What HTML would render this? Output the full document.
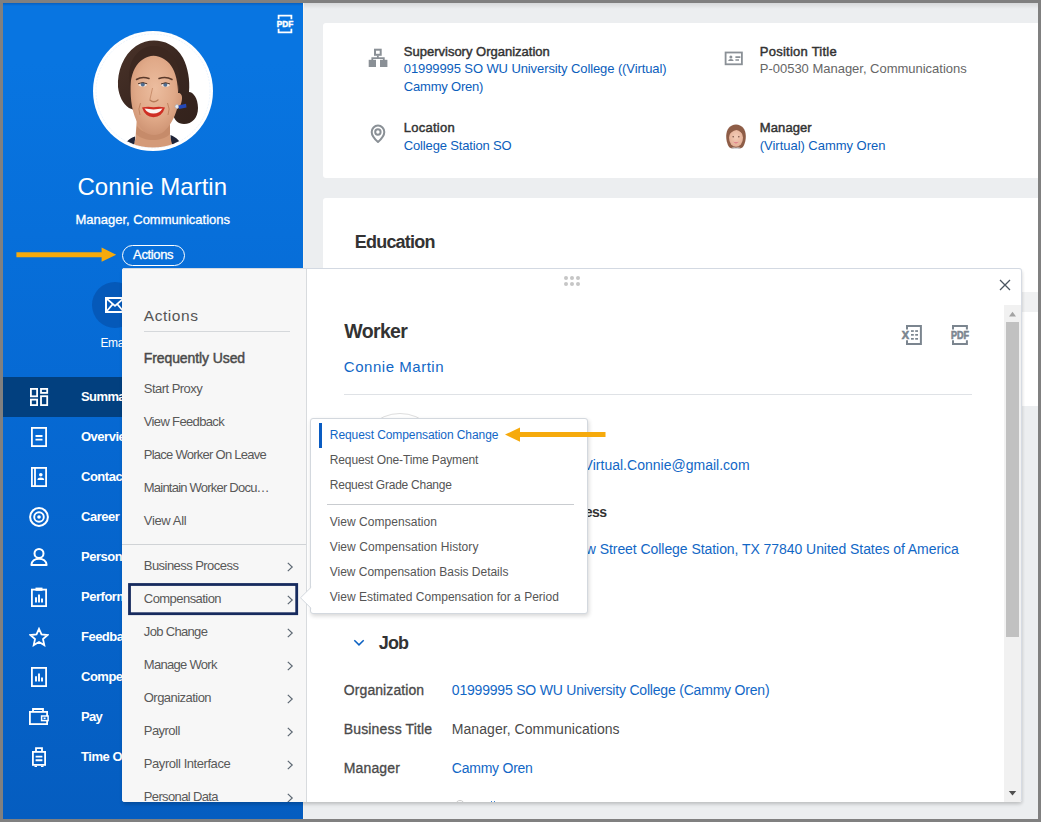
<!DOCTYPE html>
<html lang="en">
<head>
<meta charset="utf-8">
<title>Worker Profile - Connie Martin</title>
<style>
*{box-sizing:border-box;margin:0;padding:0}
html,body{width:1041px;height:822px;overflow:hidden;background:#808080;font-family:"Liberation Sans",Arial,sans-serif}
#frame{position:absolute;left:3px;top:3px;width:1035px;height:816px;overflow:hidden;background:#eceef0}
.abs{position:absolute}
.t{position:absolute;white-space:nowrap;line-height:1;font-size:14px;color:#333}
/* sidebar */
#side{position:absolute;left:0;top:0;width:300px;height:816px;background:linear-gradient(180deg,#0875e1 0px,#0875e1 60px,#0669d3 400px,#055dc0 816px)}
#side .topshade{position:absolute;left:0;top:0;width:300px;height:3px;background:linear-gradient(180deg,rgba(0,40,110,.28),rgba(0,40,110,0))}
#sel{position:absolute;left:0;top:374px;width:300px;height:40px;background:#02407f}
.ico{position:absolute;left:26px;width:20px;height:20px}
/* cards */
.card{position:absolute;background:#fff;border-radius:3px 0 0 3px}
/* popup */
#pop{position:absolute;left:119px;top:265px;width:900px;height:534px;background:#fff;border-radius:3px;box-shadow:0 3px 4px -1px rgba(0,0,0,.15),1px 2px 3px rgba(0,0,0,.07)}
#menu{position:absolute;left:0;top:0;width:185px;height:534px;background:#f7f7f7;border-right:1px solid #d8dbde;border-radius:3px 0 0 3px;overflow:hidden}
.chev{position:absolute;left:164px;width:8px;height:12px}
#body{position:absolute;left:185px;top:0;width:715px;height:534px;overflow:hidden;border-radius:0 3px 3px 0}
/* submenu */
#sub{position:absolute;left:307px;top:415px;width:278px;height:196px;background:#fff;border:1px solid #d3d8de;border-radius:3px;box-shadow:1px 2px 4px rgba(0,0,0,.16)}
</style>
</head>
<body>
<div id="frame">

<!-- ================= SIDEBAR ================= -->
<div id="side">
  <div class="topshade"></div>
  <div id="sel"></div>
  <!-- pdf icon -->
  <svg class="abs" style="left:270px;top:8px" width="26" height="26" viewBox="0 0 26 26">
    <path d="M5.6 8.2V4.7H18.4V8.2M5.6 17.8V21.3H18.4V17.8" fill="none" stroke="#fff" stroke-width="1.8"/>
    <text x="3.8" y="16.4" font-family="Liberation Sans, Arial, sans-serif" font-size="9" font-weight="700" fill="#fff" stroke="#fff" stroke-width="0.5" textLength="16.4" lengthAdjust="spacingAndGlyphs">PDF</text>
  </svg>
  <!-- avatar -->
  <svg class="abs" style="left:89px;top:27px" width="122" height="122" viewBox="0 0 122 122">
    <defs>
      <clipPath id="avc"><circle cx="61" cy="61" r="56.5"/></clipPath>
      <radialGradient id="skin" cx="0.48" cy="0.42" r="0.62">
        <stop offset="0" stop-color="#ecbd9f"/><stop offset="0.6" stop-color="#e0a988"/><stop offset="1" stop-color="#cb9070"/>
      </radialGradient>
      <linearGradient id="hairg" x1="0" y1="0" x2="1" y2="1">
        <stop offset="0" stop-color="#4a3329"/><stop offset="0.5" stop-color="#3a2720"/><stop offset="1" stop-color="#33221c"/>
      </linearGradient>
    </defs>
    <circle cx="61" cy="61" r="60" fill="#fff"/>
    <circle cx="61" cy="61" r="57" fill="none" stroke="#d9e8fa" stroke-width="0.5" stroke-dasharray="2 1.2"/>
    <g clip-path="url(#avc)">
      <!-- hair back incl. bun -->
      <path d="M37 78C31 74 27 66 26 57C25 42 31 25 44 16C50 12 56 10.5 62 10.5C72 10.5 84 15 91 28C96 38 98 50 97 62C101 62 106 68 106 78C106 88 100 94 92 94C86 94 82 90 81 84L42 80Z" fill="url(#hairg)"/>
      <!-- neck -->
      <path d="M45 86L43.5 108C43 113 40 116 37 118L36 122H86L84 114C80 112 78 109 78 104L78 82Z" fill="#d49a78"/>
      <path d="M45 96C52 106 70 106 78 94L78 104C70 112 52 112 44 104Z" fill="#b97f5e" opacity=".55"/>
      <!-- clothes -->
      <path d="M30 122C31 114 36 109 43 106.5C43.5 110 42 114 40 122Z" fill="#1f2438"/>
      <path d="M92 122C91 114 86 108 78.5 105C78.5 110 80 115 83 122Z" fill="#1f2438"/>
      <!-- face -->
      <path d="M38.5 52C38 38 46 25.5 61.5 25.5C77 25.5 86.5 37 86.5 52C86.5 56 86.3 60 86 63C88.5 62.5 90.5 65 90 69C89.5 74 87.5 78 85 79C82.5 88 78 96 72 101.5C67 106 57 106 52 101.5C44 94 39.5 80 38.8 66C38.6 61 38.5 56 38.5 52Z" fill="url(#skin)"/>
      <!-- hair front / hairline -->
      <path d="M61.5 16C52 16 42 23 38.5 35C36.5 43 36.5 52 38 61C38.3 49 41 39 46.5 33C51.5 28 57 26 61.5 25.5C66 26 72 28 77 33C82.5 39 85.5 49 86 61C88 52 88 42 85 34C81 23 72 16 61.5 16Z" fill="#3c2820"/>
      <!-- brows -->
      <path d="M44.5 49.5Q50 46 57 48.5M67 48.5Q74 46 80 49.5" stroke="#5b3a2b" stroke-width="1.5" fill="none" stroke-linecap="round"/>
      <!-- eyes -->
      <ellipse cx="50.6" cy="54.6" rx="4.2" ry="2" fill="#f1e4dc"/>
      <ellipse cx="73.5" cy="54.8" rx="4.2" ry="2" fill="#f1e4dc"/>
      <circle cx="50.8" cy="54.6" r="2" fill="#4f6f94"/>
      <circle cx="73.3" cy="54.8" r="2" fill="#4f6f94"/>
      <path d="M46 53.8Q50.6 51.2 55.2 53.8M69 54Q73.5 51.4 78 54" stroke="#4a3026" stroke-width="1" fill="none"/>
      <!-- nose -->
      <path d="M58 70Q61.5 73.5 66 70" stroke="#b57a59" stroke-width="1.3" fill="none" stroke-linecap="round"/>
      <path d="M60.5 58Q59 65 58 69" stroke="#c98f6d" stroke-width="1" fill="none"/>
      <!-- smile lines -->
      <path d="M48.5 73Q45.5 79 48 85M75.5 73Q78.5 79 76 85" stroke="#c08461" stroke-width="1" fill="none"/>
      <!-- mouth -->
      <path d="M50 77.5Q56 76 61.5 77.3Q67 76 73 77.5Q70 87 61.5 87.2Q53 87 50 77.5Z" fill="#cf2f24"/>
      <path d="M52.5 78.6Q61.5 80.2 70.5 78.6Q67.5 83.6 61.5 83.6Q55.5 83.6 52.5 78.6Z" fill="#fbf6f2"/>
      <!-- earring + tie -->
      <circle cx="85" cy="76.5" r="2" fill="#e9ebee" stroke="#9aa0a8" stroke-width=".5"/>
      <path d="M86.5 75.5L94 73.8L94.5 77.5L87 79Z" fill="#2348b8"/>
    </g>
  </svg>
  <!-- actions button -->
  <div class="abs" style="left:119px;top:242px;width:63px;height:21px;border:1px solid #fff;border-radius:11px"></div>
  <!-- orange arrow -->
  <svg class="abs" style="left:10px;top:240px" width="110" height="24" viewBox="0 0 110 24">
    <path d="M3.4 9.2H88.6V4.5L103.2 11.7L88.6 18.8V14.2H3.4Z" fill="#f6aa0c"/>
  </svg>
  <!-- email -->
  <div class="abs" style="left:89px;top:279px;width:46px;height:46px;border-radius:50%;background:#0559b9"></div>
  <svg class="abs" style="left:101px;top:293px" width="22" height="18" viewBox="0 0 22 18">
    <rect x="2" y="2" width="18" height="14" fill="none" stroke="#fff" stroke-width="2"/>
    <path d="M2.5 2.5L11 9.8L19.5 2.5M2.5 15.5L8.3 8.6M19.5 15.5L13.7 8.6" fill="none" stroke="#fff" stroke-width="1.7"/>
  </svg>
  <svg class="ico" style="top:384px" viewBox="0 0 20 20"><rect x="1.9" y="1.9" width="6.2" height="7.4" stroke="#fff" fill="none" stroke-width="1.8"/><rect x="12" y="1.9" width="6.2" height="4" stroke="#fff" fill="none" stroke-width="1.8"/><rect x="1.9" y="12.6" width="6.2" height="5.5" stroke="#fff" fill="none" stroke-width="1.8"/><rect x="12" y="9.2" width="6.2" height="8.9" stroke="#fff" fill="none" stroke-width="1.8"/></svg>
  <svg class="ico" style="top:424px" viewBox="0 0 20 20"><rect x="2.9" y="0.9" width="14.2" height="18.2" stroke="#fff" fill="none" stroke-width="1.8"/><path d="M6.5 9H13.5M6.5 12.6H13.5" stroke="#fff" fill="none" stroke-width="1.8"/></svg>
  <svg class="ico" style="top:464px" viewBox="0 0 20 20"><rect x="2.9" y="0.9" width="14.2" height="18.2" stroke="#fff" fill="none" stroke-width="1.8"/><path d="M6 0.9V19.1" stroke="#fff" fill="none" stroke-width="1.8" stroke-width="1.4"/><circle cx="11.8" cy="7.7" r="1.8" fill="#fff"/><path d="M8.4 13C8.4 9.8 15.2 9.8 15.2 13Z" fill="#fff"/></svg>
  <svg class="ico" style="top:504px" viewBox="0 0 20 20"><circle cx="10" cy="10" r="8.9" stroke="#fff" fill="none" stroke-width="2"/><circle cx="10" cy="10" r="4.8" stroke="#fff" fill="none" stroke-width="1.9"/><circle cx="10" cy="10" r="1.8" fill="#fff"/></svg>
  <svg class="ico" style="top:544px" viewBox="0 0 20 20"><circle cx="10" cy="6.4" r="4.5" stroke="#fff" fill="none" stroke-width="2"/><path d="M2.4 18.1C2.4 9.6 17.6 9.6 17.6 18.1Z" stroke="#fff" fill="none" stroke-width="2" stroke-linejoin="round"/></svg>
  <svg class="ico" style="top:584px" viewBox="0 0 20 20"><rect x="2.9" y="2.6" width="14.2" height="16.5" stroke="#fff" fill="none" stroke-width="1.8"/><rect x="6.5" y="0.6" width="7" height="3.2" fill="#fff"/><path d="M7 15.6V10.2M10 15.6V7.6M13 15.6V11.6" stroke="#fff" fill="none" stroke-width="1.9"/></svg>
  <svg class="ico" style="top:624px" viewBox="0 0 20 20"><path d="M10 1.8L12.5 7.4L18.6 8L14 12.1L15.3 18.1L10 15L4.7 18.1L6 12.1L1.4 8L7.5 7.4Z" stroke="#fff" fill="none" stroke-width="1.8" stroke-width="1.7" stroke-linejoin="miter"/></svg>
  <svg class="ico" style="top:664px" viewBox="0 0 20 20"><rect x="2.9" y="0.9" width="14.2" height="18.2" stroke="#fff" fill="none" stroke-width="1.8"/><path d="M7 14.4V9.2M10 14.4V6.4M13 14.4V10.6" stroke="#fff" fill="none" stroke-width="1.9"/></svg>
  <svg class="ico" style="top:704px" viewBox="0 0 20 20"><rect x="0.9" y="4.9" width="17.2" height="12.2" stroke="#fff" fill="none" stroke-width="1.8"/><path d="M4 4.5V2H14V4.5" stroke="#fff" fill="none" stroke-width="1.8"/><rect x="12.6" y="9" width="6.5" height="4.6" fill="#0561c8" stroke="#fff" stroke-width="1.5"/><rect x="14.6" y="10.5" width="2" height="1.6" fill="#fff"/></svg>
  <svg class="ico" style="top:744px" viewBox="0 0 20 20"><rect x="3.9" y="4.9" width="12.2" height="13" stroke="#fff" fill="none" stroke-width="1.8"/><path d="M7 4.5V1.2H13V4.5M5.5 19.6H8M12 19.6H14.5" stroke="#fff" fill="none" stroke-width="1.8" stroke-width="1.6"/><path d="M6.6 9.6H13.4M6.6 13.3H13.4" stroke="#fff" fill="none" stroke-width="1.9"/></svg>
  <div class="t" style="left:74.50px;top:172.00px;font-size:24px;color:#fff;letter-spacing:0.008px;">Connie Martin</div>
  <div class="t" style="left:72.50px;top:210.00px;font-size:13px;color:#fff;letter-spacing:-0.006px;-webkit-text-stroke:0.3px #fff;">Manager, Communications</div>
  <div class="t" style="left:130.10px;top:245.00px;font-size:13px;color:#fff;letter-spacing:-0.373px;-webkit-text-stroke:0.3px #fff;">Actions</div>
  <div class="t" style="left:97.50px;top:334.00px;font-size:12px;color:#fff;letter-spacing:-0.379px;">Email</div>
  <div class="t" style="left:78.00px;top:387.00px;font-size:13px;color:#fff;font-weight:bold;letter-spacing:-0.592px;">Summary</div>
  <div class="t" style="left:78.00px;top:427.00px;font-size:13px;color:#fff;font-weight:bold;letter-spacing:-0.496px;">Overview</div>
  <div class="t" style="left:78.00px;top:467.00px;font-size:13px;color:#fff;font-weight:bold;letter-spacing:-0.484px;">Contact</div>
  <div class="t" style="left:78.00px;top:507.00px;font-size:13px;color:#fff;font-weight:bold;letter-spacing:-0.494px;">Career</div>
  <div class="t" style="left:78.00px;top:547.00px;font-size:13px;color:#fff;font-weight:bold;letter-spacing:-0.471px;">Personal</div>
  <div class="t" style="left:78.00px;top:587.00px;font-size:13px;color:#fff;font-weight:bold;letter-spacing:-0.477px;">Performance</div>
  <div class="t" style="left:78.00px;top:627.00px;font-size:13px;color:#fff;font-weight:bold;letter-spacing:-0.514px;">Feedback</div>
  <div class="t" style="left:78.00px;top:667.00px;font-size:13px;color:#fff;font-weight:bold;letter-spacing:-0.493px;">Compensation</div>
  <div class="t" style="left:78.00px;top:707.00px;font-size:13px;color:#fff;font-weight:bold;letter-spacing:-0.694px;">Pay</div>
  <div class="t" style="left:78.00px;top:747.00px;font-size:13px;color:#fff;font-weight:bold;letter-spacing:-0.450px;">Time Off</div>
</div>

<!-- ================= CARDS ================= -->
<div class="abs" style="left:300px;top:0;width:735px;height:6px;background:linear-gradient(180deg,rgba(0,0,0,.09),rgba(0,0,0,0))"></div>
<div class="abs" style="left:300px;top:0;width:1px;height:816px;background:#f6f2ea"></div>
<div class="card" style="left:320px;top:20px;width:715px;height:155px"></div>
<div class="card" style="left:320px;top:195px;width:715px;height:208px">
  <div class="abs" style="left:0;top:94px;width:715px;height:20px;background:#f0f1f2"></div>
</div>
<!-- org chart icon -->
<svg class="abs" style="left:365px;top:45px" width="20" height="20" viewBox="0 0 20 20">
  <rect x="7" y="1.7" width="5.7" height="5.1" fill="none" stroke="#8a9096" stroke-width="2"/>
  <path d="M9.85 7.6V10M4.3 12.2V10.05H15.8V12.2" fill="none" stroke="#8a9096" stroke-width="1.8"/>
  <rect x="0.7" y="11.8" width="7.3" height="7.2" fill="#8a9096"/>
  <rect x="12" y="11.8" width="7.4" height="7.2" fill="#8a9096"/>
</svg>
<!-- location pin icon -->
<svg class="abs" style="left:365px;top:121px" width="20" height="20" viewBox="0 0 20 20">
  <path d="M10 17.9C10 17.9 3.7 12.4 3.7 7.9A6.3 6.3 0 0 1 16.3 7.9C16.3 12.4 10 17.9 10 17.9Z" fill="none" stroke="#8a9096" stroke-width="2" stroke-linejoin="round"/>
  <circle cx="9.9" cy="8" r="2.7" fill="none" stroke="#8a9096" stroke-width="2"/>
</svg>
<!-- id card icon -->
<svg class="abs" style="left:721px;top:47px" width="22" height="17" viewBox="0 0 22 17">
  <rect x="1.6" y="2.5" width="16.3" height="11.8" fill="none" stroke="#8a9096" stroke-width="1.8"/>
  <circle cx="6.9" cy="6.9" r="1.5" fill="#8a9096"/>
  <path d="M4.2 11C4.2 8.2 9.6 8.2 9.6 11Z" fill="#8a9096"/>
  <path d="M11.4 7.1H16.4M11.4 10H15" stroke="#8a9096" stroke-width="1.6"/>
</svg>
<!-- manager avatar -->
<svg class="abs" style="left:722px;top:120px" width="22" height="27" viewBox="0 0 22 27">
  <defs><clipPath id="mgc"><path d="M11 1.400C17 1.400 20.800 6.400 20.800 13C20.800 18.400 19.200 22.800 17.400 24.400C15.400 25.600 13 26 11 26C9 26 6.600 25.600 4.600 24.400C2.800 22.800 1.200 18.400 1.200 13C1.200 6.400 5 1.400 11 1.400Z"/></clipPath>
  <radialGradient id="mgs" cx="0.5" cy="0.45" r="0.6"><stop offset="0" stop-color="#f3cdb8"/><stop offset="1" stop-color="#e3ad93"/></radialGradient></defs>
  <g clip-path="url(#mgc)">
    <rect width="22" height="27" fill="#8e5d47"/>
    <ellipse cx="11" cy="14.800" rx="7" ry="9" fill="url(#mgs)"/>
    <path d="M2.800 14C2.800 6 7.600 3 11 3C15 3 19.200 6 19.200 14C17.400 10 14.600 7.600 11.400 7C8 7.600 4.800 10 2.800 14Z" fill="#8e5d47"/>
    <circle cx="8.200" cy="13.800" r="0.800" fill="#7a5548"/><circle cx="13.800" cy="13.800" r="0.800" fill="#7a5548"/>
    <path d="M8 18.600Q11 20.400 14 18.600Q11 22.200 8 18.600Z" fill="#dc5f80"/>
    <path d="M5 27C5.500 24.600 8.500 24 11 24.800C13.500 24 16.500 24.600 17 27Z" fill="#d5d7db"/>
  </g>
</svg>
<div class="t" style="left:400.80px;top:42.00px;font-size:13px;color:#333;-webkit-text-stroke:0.45px #333;">Supervisory Organization</div>
  <div class="t" style="left:400.80px;top:59.00px;font-size:13px;color:#0b5ebc;letter-spacing:-0.100px;">01999995 SO WU University College ((Virtual)</div>
  <div class="t" style="left:400.80px;top:77.00px;font-size:13px;color:#0b5ebc;letter-spacing:-0.203px;">Cammy Oren)</div>
  <div class="t" style="left:400.80px;top:118.00px;font-size:13px;color:#333;-webkit-text-stroke:0.45px #333;letter-spacing:0.249px;">Location</div>
  <div class="t" style="left:400.80px;top:136.00px;font-size:13px;color:#0b5ebc;letter-spacing:-0.158px;">College Station SO</div>
  <div class="t" style="left:756.80px;top:42.00px;font-size:13px;color:#333;-webkit-text-stroke:0.45px #333;letter-spacing:0.246px;">Position Title</div>
  <div class="t" style="left:756.80px;top:59.00px;font-size:13px;color:#666;letter-spacing:-0.016px;">P-00530 Manager, Communications</div>
  <div class="t" style="left:756.80px;top:118.00px;font-size:13px;color:#333;-webkit-text-stroke:0.45px #333;letter-spacing:0.098px;">Manager</div>
  <div class="t" style="left:756.80px;top:136.00px;font-size:13px;color:#0b5ebc;letter-spacing:-0.031px;">(Virtual) Cammy Oren</div>
  <div class="t" style="left:351.80px;top:230.00px;font-size:18px;color:#333;font-weight:bold;letter-spacing:-0.802px;">Education</div>

<!-- ================= POPUP ================= -->
<div id="pop">
  <div id="menu">
    <div class="abs" style="left:22px;top:63px;width:146px;height:1px;background:#d5d8db"></div>
    <div class="abs" style="left:0;top:276px;width:185px;height:1px;background:#d0d3d6"></div>
    <svg class="abs" style="left:5px;top:314px" width="173" height="34" viewBox="0 0 173 34"><rect x="2.5" y="2.5" width="167.2" height="29.2" fill="none" stroke="#172b5e" stroke-width="2.8"/></svg>
    <svg class="chev" style="top:293.3px" viewBox="0 0 8 12"><path d="M1.8 1.9L6.2 6L1.8 10.1" fill="none" stroke="#5d6873" stroke-width="1.2"/></svg>
    <svg class="chev" style="top:326.3px" viewBox="0 0 8 12"><path d="M1.8 1.9L6.2 6L1.8 10.1" fill="none" stroke="#5d6873" stroke-width="1.2"/></svg>
    <svg class="chev" style="top:359.3px" viewBox="0 0 8 12"><path d="M1.8 1.9L6.2 6L1.8 10.1" fill="none" stroke="#5d6873" stroke-width="1.2"/></svg>
    <svg class="chev" style="top:392.3px" viewBox="0 0 8 12"><path d="M1.8 1.9L6.2 6L1.8 10.1" fill="none" stroke="#5d6873" stroke-width="1.2"/></svg>
    <svg class="chev" style="top:425.3px" viewBox="0 0 8 12"><path d="M1.8 1.9L6.2 6L1.8 10.1" fill="none" stroke="#5d6873" stroke-width="1.2"/></svg>
    <svg class="chev" style="top:458.3px" viewBox="0 0 8 12"><path d="M1.8 1.9L6.2 6L1.8 10.1" fill="none" stroke="#5d6873" stroke-width="1.2"/></svg>
    <svg class="chev" style="top:491.3px" viewBox="0 0 8 12"><path d="M1.8 1.9L6.2 6L1.8 10.1" fill="none" stroke="#5d6873" stroke-width="1.2"/></svg>
    <svg class="chev" style="top:524.3px" viewBox="0 0 8 12"><path d="M1.8 1.9L6.2 6L1.8 10.1" fill="none" stroke="#5d6873" stroke-width="1.2"/></svg>
    <div class="t" style="left:21.80px;top:40.00px;font-size:15.5px;color:#555;letter-spacing:0.543px;">Actions</div>
  <div class="t" style="left:21.80px;top:83.00px;font-size:14px;color:#4a4a4a;-webkit-text-stroke:0.45px #4a4a4a;letter-spacing:-0.101px;">Frequently Used</div>
  <div class="t" style="left:21.80px;top:114.00px;font-size:13px;color:#595959;letter-spacing:-0.530px;">Start Proxy</div>
  <div class="t" style="left:21.80px;top:147.00px;font-size:13px;color:#595959;letter-spacing:-0.646px;">View Feedback</div>
  <div class="t" style="left:21.80px;top:180.00px;font-size:13px;color:#595959;letter-spacing:-0.744px;">Place Worker On Leave</div>
  <div class="t" style="left:21.80px;top:213.00px;font-size:13px;color:#595959;letter-spacing:-0.779px;">Maintain Worker Docu…</div>
  <div class="t" style="left:21.80px;top:246.00px;font-size:13px;color:#595959;letter-spacing:-0.357px;">View All</div>
  <div class="t" style="left:21.80px;top:291.00px;font-size:13px;color:#595959;letter-spacing:-0.549px;">Business Process</div>
  <div class="t" style="left:21.80px;top:324.00px;font-size:13px;color:#595959;letter-spacing:-0.548px;">Compensation</div>
  <div class="t" style="left:21.80px;top:357.00px;font-size:13px;color:#595959;letter-spacing:-0.669px;">Job Change</div>
  <div class="t" style="left:21.80px;top:390.00px;font-size:13px;color:#595959;letter-spacing:-0.709px;">Manage Work</div>
  <div class="t" style="left:21.80px;top:423.00px;font-size:13px;color:#595959;letter-spacing:-0.538px;">Organization</div>
  <div class="t" style="left:21.80px;top:456.00px;font-size:13px;color:#595959;letter-spacing:-0.542px;">Payroll</div>
  <div class="t" style="left:21.80px;top:489.00px;font-size:13px;color:#595959;letter-spacing:-0.440px;">Payroll Interface</div>
  <div class="t" style="left:21.80px;top:522.00px;font-size:13px;color:#595959;letter-spacing:-0.641px;">Personal Data</div>
  </div>
  <div id="body">
    <!-- drag dots -->
    <svg class="abs" style="left:255px;top:6px" width="20" height="14" viewBox="0 0 20 14">
      <g fill="#c6c6c6"><circle cx="4" cy="4" r="2"/><circle cx="10" cy="4" r="2"/><circle cx="16" cy="4" r="2"/><circle cx="4" cy="10" r="2"/><circle cx="10" cy="10" r="2"/><circle cx="16" cy="10" r="2"/></g>
    </svg>
    <!-- close -->
    <svg class="abs" style="left:691px;top:10px" width="14" height="14" viewBox="0 0 14 14">
      <path d="M2 2L12 12M12 2L2 12" stroke="#4a5561" stroke-width="1.3" fill="none"/>
    </svg>
    <!-- excel + pdf icons -->
    <svg class="abs" style="left:590px;top:50px" width="80" height="34" viewBox="0 0 80 34">
      <g fill="none" stroke="#7b858f" stroke-width="2">
        <path d="M10 11.5V7.9H23.9V25.9H10V22.3"/>
        <path d="M56 11.5V7.9H69.9V11.5M56 22.3V25.9H69.9V22.3"/>
      </g>
      <g fill="#7b858f">
        <rect x="14" y="12.2" width="2.8" height="1.7"/><rect x="18.2" y="12.2" width="2.8" height="1.7"/>
        <rect x="14" y="16" width="2.8" height="1.7"/><rect x="18.2" y="16" width="2.8" height="1.7"/>
        <rect x="14" y="20" width="2.8" height="1.7"/><rect x="18.2" y="20" width="2.8" height="1.7"/>
        <text x="8.4" y="20.8" text-anchor="middle" font-family="Liberation Sans, Arial, sans-serif" font-size="11" font-weight="700" stroke="#7b858f" stroke-width="0.6">X</text>
        <text x="54" y="20.5" font-family="Liberation Sans, Arial, sans-serif" font-size="10" font-weight="700" stroke="#7b858f" stroke-width="0.6" textLength="18" lengthAdjust="spacingAndGlyphs">PDF</text>
      </g>
    </svg>
    <div class="abs" style="left:37px;top:126px;width:628px;height:1px;background:#dfe2e6"></div>
    <!-- hidden avatar outline -->
    <div class="abs" style="left:51px;top:145px;width:84px;height:84px;border:1px solid #dedede;border-radius:50%"></div>
    <!-- job chevron -->
    <svg class="abs" style="left:45px;top:369px" width="16" height="12" viewBox="0 0 16 12">
      <path d="M2.3 3.2L7 7.9L11.7 3.2" fill="none" stroke="#0b61c2" stroke-width="1.5"/>
    </svg>
    <div class="t" style="left:37.30px;top:54.00px;font-size:19.5px;color:#333;font-weight:bold;letter-spacing:-0.649px;">Worker</div>
  <div class="t" style="left:36.80px;top:91.00px;font-size:15px;color:#1267c6;letter-spacing:0.534px;">Connie Martin</div>
  <div class="t" style="left:276.60px;top:190.00px;font-size:14px;color:#1267c6;letter-spacing:0.013px;">Virtual.Connie@gmail.com</div>
  <div class="t" style="left:247.43px;top:237.00px;font-size:14px;color:#333;font-weight:bold;letter-spacing:-0.560px;">Address</div>
  <div class="t" style="left:214.01px;top:274.00px;font-size:14px;color:#1267c6;letter-spacing:-0.058px;">1201 Willow Street College Station, TX 77840 United States of America</div>
  <div class="t" style="left:71.80px;top:366.00px;font-size:18px;color:#333;font-weight:bold;letter-spacing:-0.858px;">Job</div>
  <div class="t" style="left:36.80px;top:415.00px;font-size:14px;color:#4a4a4a;letter-spacing:0.083px;-webkit-text-stroke:0.32px #4a4a4a;">Organization</div>
  <div class="t" style="left:144.80px;top:415.00px;font-size:14px;color:#1267c6;letter-spacing:-0.200px;">01999995 SO WU University College (Cammy Oren)</div>
  <div class="t" style="left:36.80px;top:454.00px;font-size:14px;color:#4a4a4a;letter-spacing:0.148px;-webkit-text-stroke:0.32px #4a4a4a;">Business Title</div>
  <div class="t" style="left:144.80px;top:454.00px;font-size:14px;color:#4a4a4a;letter-spacing:0.058px;">Manager, Communications</div>
  <div class="t" style="left:36.80px;top:493.00px;font-size:14px;color:#4a4a4a;letter-spacing:0.139px;-webkit-text-stroke:0.32px #4a4a4a;">Manager</div>
  <div class="t" style="left:144.80px;top:493.00px;font-size:14px;color:#1267c6;letter-spacing:-0.237px;">Cammy Oren</div>
  <div class="t" style="left:144.80px;top:533.00px;font-size:14px;color:#1267c6;letter-spacing:-0.070px;">College Station SO</div>
    <div class="abs" style="left:148px;top:532.4px;width:10px;height:10px;border:1px solid #c9c9c9;border-radius:50%"></div>
    <div class="abs" style="left:183.6px;top:533px;width:1.3px;height:3px;background:#3d82d0"></div>
    <div class="abs" style="left:186.8px;top:533px;width:1.3px;height:3px;background:#3d82d0"></div>
    <!-- scrollbar -->
    <div class="abs" style="left:697px;top:37px;width:17px;height:497px;background:#f1f1f1"></div>
    <div class="abs" style="left:699px;top:54px;width:13px;height:315px;background:#c1c1c1"></div>
    <svg class="abs" style="left:697px;top:37px" width="17" height="17" viewBox="0 0 17 17"><path d="M5 11.4L8.5 6.8L12 11.4Z" fill="#a3a3a3"/></svg>
    <svg class="abs" style="left:697px;top:517px" width="17" height="17" viewBox="0 0 17 17"><path d="M4.8 6L8.5 10.4L12.2 6Z" fill="#505050"/></svg>
  </div>
  <div class="abs" style="left:0;top:0;width:900px;height:534px;border:1px solid #d3d9e2;border-right-color:#d6dbe3;border-bottom-color:transparent;border-left-color:transparent;border-radius:3px"></div>
</div>

<!-- ================= SUBMENU ================= -->
<svg class="abs" style="left:295px;top:582px;z-index:3" width="16" height="28" viewBox="0 0 16 28">
  <path d="M13.2 2.2L2.5 12.8L13.2 23.4" fill="#fff" stroke="#d3d8de" stroke-width="1"/>
  <rect x="13" y="3.2" width="3" height="19.4" fill="#fff"/>
</svg>
<div id="sub">
  <div class="abs" style="left:8px;top:4px;width:3px;height:25px;background:#0a5cc2"></div>
  <div class="abs" style="left:16px;top:85px;width:247px;height:1px;background:#c9ccd0"></div>
  <div class="t" style="left:18.80px;top:10.00px;font-size:12px;color:#1266c6;letter-spacing:-0.084px;">Request Compensation Change</div>
  <div class="t" style="left:18.80px;top:35.00px;font-size:12px;color:#555;letter-spacing:-0.132px;">Request One-Time Payment</div>
  <div class="t" style="left:18.80px;top:60.00px;font-size:12px;color:#555;letter-spacing:-0.245px;">Request Grade Change</div>
  <div class="t" style="left:18.80px;top:97.00px;font-size:12px;color:#555;letter-spacing:0.037px;">View Compensation</div>
  <div class="t" style="left:18.80px;top:122.00px;font-size:12px;color:#555;letter-spacing:0.059px;">View Compensation History</div>
  <div class="t" style="left:18.80px;top:147.00px;font-size:12px;color:#555;letter-spacing:-0.020px;">View Compensation Basis Details</div>
  <div class="t" style="left:18.80px;top:172.00px;font-size:12px;color:#555;letter-spacing:0.014px;">View Estimated Compensation for a Period</div>
</div>
<!-- orange arrow 2 -->
<svg class="abs" style="left:498px;top:420px" width="110" height="24" viewBox="0 0 110 24">
  <path d="M4 11.6L19 4.4V9H104.5V14H19V18.8Z" fill="#f6aa0c"/>
</svg>

</div>
</body>
</html>
